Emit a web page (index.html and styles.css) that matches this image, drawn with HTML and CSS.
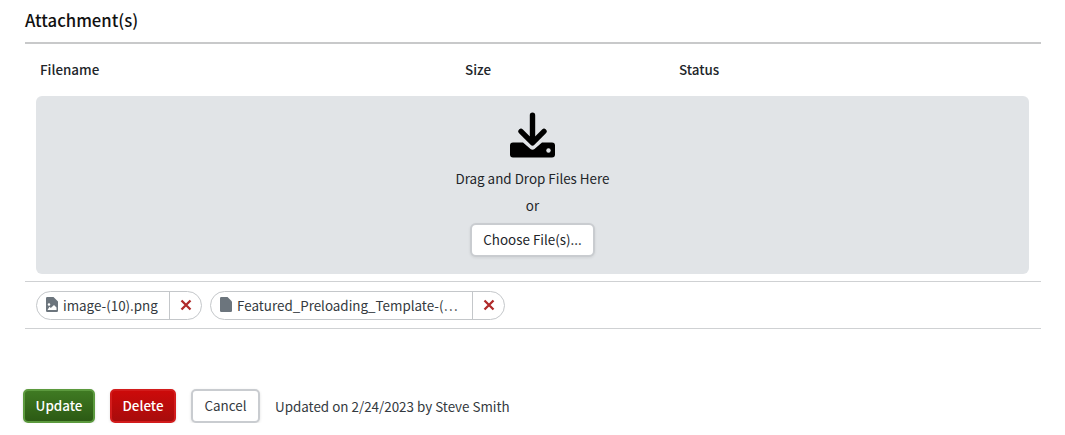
FILE: index.html
```html
<!DOCTYPE html>
<html lang="en">
<head>
<meta charset="utf-8">
<title>Attachments</title>
<link rel="stylesheet" href="styles.css">
</head>
<body>
<main class="page">
  <h2 class="title">Attachment(s)</h2>
  <div class="columns">
    <div class="col col-name">Filename</div>
    <div class="col col-size">Size</div>
    <div class="col col-status">Status</div>
  </div>
  <section class="drop">
    <svg class="drop-icon" viewBox="0 0 45 45" aria-hidden="true">
      <path d="M22.500 2.700V30M11 18.800l11.500 11.500L34 18.800" fill="none" stroke="#000" stroke-width="5.400" stroke-linecap="round" stroke-linejoin="round"/>
      <path d="M3 30h10l7.500 6.400q2 1.600 4 0L32 30h10q3 0 3 3v9q0 3-3 3H3q-3 0-3-3v-9q0-3 3-3z"/>
      <circle cx="38.500" cy="38" r="2.200" fill="#e1e4e7"/>
    </svg>
    <p class="drop-text">Drag and Drop Files Here</p>
    <p class="drop-or">or</p>
    <button class="choose" type="button">Choose File(s)...</button>
  </section>
  <div class="files">
    <div class="chip chip-a">
      <span class="chip-name">
        <svg class="file-icon" viewBox="0 0 12 15" aria-hidden="true"><path fill-rule="evenodd" d="M1.200 0H7.500L12 4.500v9.300q0 1.200-1.200 1.200H1.200Q0 15 0 13.800V1.200Q0 0 1.200 0zM3 6.200a1.300 1.300 0 1 0 0 2.600 1.300 1.300 0 0 0 0-2.600zM1.500 13h9V10.500L8 8 4.800 11 3.500 9.700z"/></svg>
        image-(10).png
      </span>
      <button class="chip-x" type="button" aria-label="Remove">
        <svg viewBox="0 0 12 12" aria-hidden="true"><path d="M1.500 1.500l9 9M10.500 1.500l-9 9"/></svg>
      </button>
    </div>
    <div class="chip chip-b">
      <span class="chip-name">
        <svg class="file-icon" viewBox="0 0 12 15" aria-hidden="true"><path d="M1.200 0H7.500L12 4.500v9.300q0 1.200-1.200 1.200H1.200Q0 15 0 13.800V1.200Q0 0 1.200 0z"/></svg>
        Featured_Preloading_Template-(…
      </span>
      <button class="chip-x" type="button" aria-label="Remove">
        <svg viewBox="0 0 12 12" aria-hidden="true"><path d="M1.500 1.500l9 9M10.500 1.500l-9 9"/></svg>
      </button>
    </div>
  </div>
  <div class="actions">
    <button class="btn btn-update" type="button">Update</button>
    <button class="btn btn-delete" type="button">Delete</button>
    <button class="btn btn-cancel" type="button">Cancel</button>
    <span class="updated">Updated on 2/24/2023 by Steve Smith</span>
  </div>
</main>
</body>
</html>
```
FILE: styles.css
```css
* { box-sizing: border-box; }
html, body { margin: 0; padding: 0; background: #fff; }
body {
  font-family: "Noto Sans CJK JP", "Open Sans", sans-serif;
  font-size: 13.4px;
  line-height: 20px;
  color: #212529;
  overflow: hidden;
}
.page { width: 1016px; margin-left: 25px; }
.title {
  margin: 0;
  height: 44px;
  padding-top: 8px;
  font-size: 16.7px;
  line-height: 24px;
  font-weight: 500;
  color: #111;
  border-bottom: 2px solid #c8c9ca;
}
.columns {
  display: flex;
  height: 52px;
  align-items: center;
  padding-left: 15px;
  padding-bottom: 3px;
  font-weight: 500;
  font-size: 13.4px;
  color: #212529;
}
.col-name { width: 425px; }
.col-size { width: 214px; }
.drop {
  margin: 0 12px 0 11px;
  height: 178px;
  padding-top: 16px;
  background: #e1e4e7;
  border-radius: 6px;
  display: flex;
  flex-direction: column;
  align-items: center;
}
.drop-icon { width: 45px; height: 46px; display: block; }
.drop-text { margin: 10px 0 0; }
.drop-or { margin: 7px 0 0; }
.choose {
  margin-top: 8px;
  width: 125px;
  height: 34px;
  background: #fff;
  border: 2px solid #c9ccd0;
  border-radius: 6px;
  box-shadow: 0 1px 3px rgba(0, 0, 0, .08);
  font: inherit;
  color: #212529;
  padding: 0 0 2px;
}
.files {
  margin-top: 7px;
  height: 48px;
  border-top: 1px solid #cfd1d3;
  border-bottom: 1px solid #cfd1d3;
  padding: 9px 0 0 11px;
  display: flex;
  gap: 8px;
}
.chip {
  display: flex;
  height: 29px;
  border: 1px solid #c4c7ca;
  border-radius: 15px;
  color: #343a40;
}
.chip-a { width: 166px; }
.chip-b { width: 295px; }
.chip-name {
  flex: 1;
  display: flex;
  align-items: center;
  gap: 5px;
  padding-left: 9px;
  padding-bottom: 1px;
  white-space: nowrap;
  border-right: 1px solid #c4c7ca;
}
.file-icon { width: 12px; height: 15px; fill: #6c757d; flex: none; margin-top: -2px; }
.chip-x {
  width: 31px;
  flex: none;
  background: none;
  border: 0;
  padding: 0 0 1px 0;
  display: flex;
  align-items: center;
  justify-content: center;
}
.chip-x svg { width: 12px; height: 12px; }
.chip-x path { fill: none; stroke: #b02a2a; stroke-width: 2.300; }
.actions {
  margin-top: 60px;
  margin-left: -2px;
  display: flex;
  align-items: center;
  gap: 15px;
}
.btn {
  height: 34px;
  border-radius: 5px;
  font: inherit;
  padding: 0 0 2px;
  border: 2px solid;
  box-shadow: 0 1px 3px rgba(0, 0, 0, .12);
}
.btn-update {
  width: 72px;
  font-weight: 500;
  color: #fff;
  background: linear-gradient(#3f7a22, #2c5a14);
  border-color: #5c9a3e;
}
.btn-delete {
  width: 66px;
  font-weight: 500;
  color: #fff;
  background: linear-gradient(#cc0a0a, #a80c0c);
  border-color: #d21c1c;
}
.btn-cancel {
  width: 69px;
  color: #343a40;
  background: #fff;
  border-color: #c9ccd0;
}
.updated { color: #343a40; padding-bottom: 1px; }
```
